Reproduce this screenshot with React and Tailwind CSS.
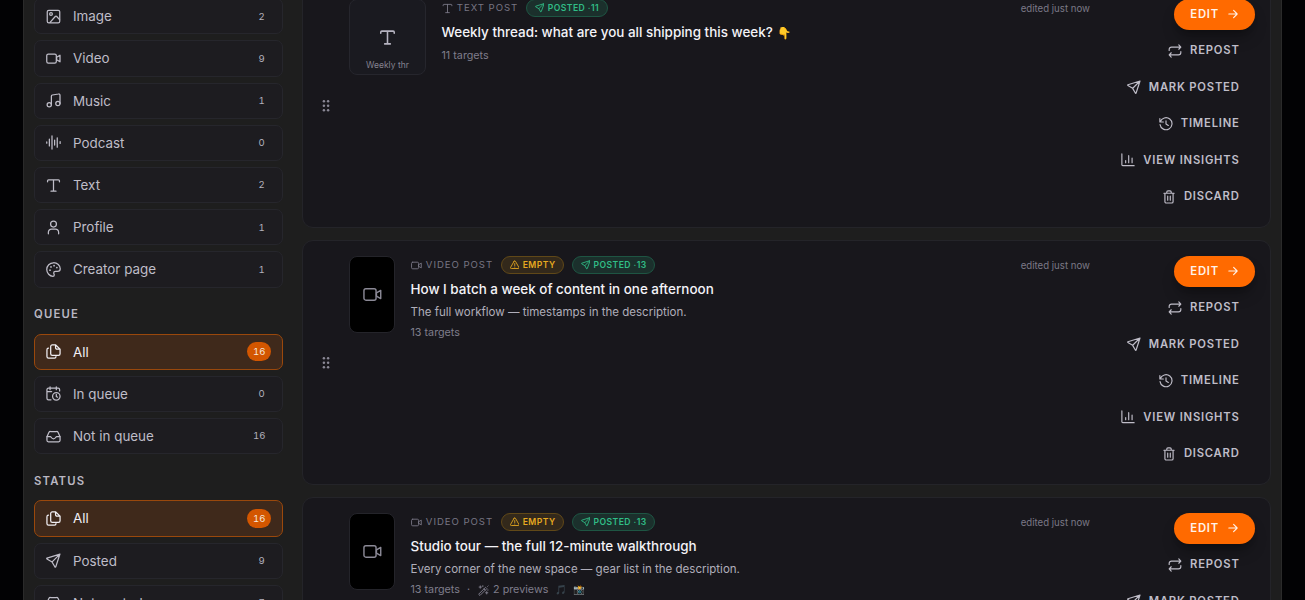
import React from 'react'
import clsx from 'clsx'

// Line icons share one 24px grid
const Icon = ({ size = 15, stroke = 2, className, children }) => (
  <svg
    width={size}
    height={size}
    viewBox="0 0 24 24"
    fill="none"
    stroke="currentColor"
    strokeWidth={stroke}
    strokeLinecap="round"
    strokeLinejoin="round"
    className={clsx('shrink-0', className)}
  >
    {children}
  </svg>
)

const ImageIcon = (p) => (
  <Icon {...p}>
    <rect x="2" y="2" width="20" height="20" rx="2.5" />
    <circle cx="8" cy="8" r="2.2" />
    <path d="M6.5 21.5 14.8 12a1.6 1.6 0 0 1 2.4 0l4.5 5" />
  </Icon>
)

const VideoIcon = (p) => (
  <Icon {...p}>
    <rect x="1.2" y="4.8" width="15.3" height="14.4" rx="2.5" />
    <path d="m17 10 5.4-3.2v10.4L17 14Z" />
  </Icon>
)

const MusicIcon = (p) => (
  <Icon {...p}>
    <circle cx="5.2" cy="18.8" r="3.4" />
    <circle cx="19" cy="16.8" r="3.4" />
    <path d="M8.6 18.8V5.2a2 2 0 0 1 1.6-2l9.8-1.6a2 2 0 0 1 2.4 2v13.2" />
  </Icon>
)

const WaveIcon = (p) => (
  <Icon {...p}>
    <path d="M1.2 11v2M5.4 6.5v11M9.6 1.5v21M13.8 8v8M18 4.5v15M22.6 10.5v3" />
  </Icon>
)

const TypeIcon = (p) => (
  <Icon {...p}>
    <path d="M12 3v18M8 21h8M2.5 6V4.5A1.5 1.5 0 0 1 4 3h16a1.5 1.5 0 0 1 1.5 1.5V6" />
  </Icon>
)

const UserIcon = (p) => (
  <Icon {...p}>
    <circle cx="12" cy="6.5" r="4.7" />
    <path d="M3.8 22v-2.5a5 5 0 0 1 5-5h6.4a5 5 0 0 1 5 5V22" />
  </Icon>
)

const PaletteIcon = (p) => (
  <Icon {...p}>
    <path d="M12 1.2C6 1.2 1.2 6 1.2 12S6 22.8 11 22.8c1.6 0 2.2-1 2.2-2.2 0-1.1-.9-1.6-.9-2.9 0-1.5 1.1-2.6 2.7-2.6h3.4c2.6 0 4.4-1.6 4.4-4.1 0-5.6-4.8-9.8-10.8-9.8Z" />
    <path d="M6.4 13v.1M8 7.8v.1M12.9 5.8v.1M17.4 8.8v.1" strokeWidth="2.8" />
  </Icon>
)

const FilesIcon = (p) => (
  <Icon {...p}>
    <path d="M15.5 1.5H10A2.5 2.5 0 0 0 7.5 4v11.5A2.5 2.5 0 0 0 10 18h10a2.5 2.5 0 0 0 2.5-2.5V8.2ZM15.3 1.7V6a2.3 2.3 0 0 0 2.3 2.3h4.7" />
    <path d="M4 6.5A2.5 2.5 0 0 0 1.5 9v11A2.5 2.5 0 0 0 4 22.5h9.5A2.5 2.5 0 0 0 16 20" />
  </Icon>
)

const CalendarClockIcon = (p) => (
  <Icon {...p}>
    <path d="M6.5 1.2v4.6M16.5 1.2v4.6M8 22H4a2.5 2.5 0 0 1-2.5-2.5V5.8a2.3 2.3 0 0 1 2.3-2.3h15.7a2.3 2.3 0 0 1 2.3 2.3V8M1.5 8.8H9" />
    <circle cx="16.5" cy="16.5" r="6" />
    <path d="M16.5 13.5v3.2l2 1.2" />
  </Icon>
)

const InboxIcon = (p) => (
  <Icon {...p}>
    <path d="M1.5 12.5 4.6 5.6A2.8 2.8 0 0 1 7.2 4h9.6a2.8 2.8 0 0 1 2.6 1.6l3.1 6.9v5.6a2.4 2.4 0 0 1-2.4 2.4H3.9a2.4 2.4 0 0 1-2.4-2.4Z" />
    <path d="M1.7 12H7c1.3 0 1.4 3.6 5 3.6s3.7-3.6 5-3.6h5.3" />
  </Icon>
)

const SendIcon = (p) => (
  <Icon {...p}>
    <path d="M22.3 1.7 1.6 8.2a.7.7 0 0 0-.1 1.3l8.2 4.8 4.6 8.1a.7.7 0 0 0 1.3-.1ZM9.8 14.2l12-12" />
  </Icon>
)

const RepeatIcon = (p) => (
  <Icon {...p}>
    <path d="m18.5 1.5 3.5 3.8-3.5 3.7M21.5 5.3H6A4 4 0 0 0 2 9.3V11M5.5 22.5 2 18.7 5.5 15M2.5 18.7H18a4 4 0 0 0 4-4V13" />
  </Icon>
)

const HistoryIcon = (p) => (
  <Icon {...p}>
    <path d="M1.5 2.5v6h6M2.2 8.3A10.3 10.3 0 1 1 1.8 13" />
    <path d="M12 6.5V12l4 2.5" />
  </Icon>
)

const ChartIcon = (p) => (
  <Icon {...p}>
    <path d="M1.5 1.5v18.7a1.5 1.5 0 0 0 1.5 1.5h19.5M8 13v3.5M13.2 4.5v12M19 8.5v8" />
  </Icon>
)

const TrashIcon = (p) => (
  <Icon {...p}>
    <path d="M3.2 5.5h17.6M8.2 5.2V3.5a2 2 0 0 1 2-2h3.6a2 2 0 0 1 2 2v1.7M5 5.8V20a2.3 2.3 0 0 0 2.3 2.3h9.4A2.3 2.3 0 0 0 19 20V5.8M9.8 10.5v7M14.2 10.5v7" />
  </Icon>
)

const ArrowIcon = (p) => (
  <Icon {...p}>
    <path d="M2 12h20M13.5 3.5 22 12l-8.5 8.5" />
  </Icon>
)

const WarningIcon = (p) => (
  <Icon {...p}>
    <path d="M10.3 3.2 1.6 18.5A2 2 0 0 0 3.3 21.5h17.4a2 2 0 0 0 1.7-3L13.7 3.2a2 2 0 0 0-3.4 0ZM12 9v5M12 17.6v.2" />
  </Icon>
)

const WandIcon = (p) => (
  <Icon {...p}>
    <path d="M2 19.5 16.5 5l2.8 2.8L4.8 22.3ZM13 8.5l2.8 2.8M5 2v5M2.5 4.5h5M19 14.5v5M16.5 17h5M10.5 1.5v2M22 2l-1 1M22 11h-1" />
  </Icon>
)

const GripIcon = () => (
  <svg width="8" height="14" viewBox="0 0 8 14" fill="currentColor">
    {[2.2, 6.7, 11.2].map((y) => (
      <React.Fragment key={y}>
        <circle cx="1.9" cy={y} r="1.25" />
        <circle cx="6.1" cy={y} r="1.25" />
      </React.Fragment>
    ))}
  </svg>
)

const formats = [
  { label: 'Image', count: 2, icon: ImageIcon },
  { label: 'Video', count: 9, icon: VideoIcon },
  { label: 'Music', count: 1, icon: MusicIcon },
  { label: 'Podcast', count: 0, icon: WaveIcon },
  { label: 'Text', count: 2, icon: TypeIcon },
  { label: 'Profile', count: 1, icon: UserIcon },
  { label: 'Creator page', count: 1, icon: PaletteIcon },
]

const queue = [
  { label: 'All', count: 16, icon: FilesIcon, active: true },
  { label: 'In queue', count: 0, icon: CalendarClockIcon },
  { label: 'Not in queue', count: 16, icon: InboxIcon },
]

const statuses = [
  { label: 'All', count: 16, icon: FilesIcon, active: true },
  { label: 'Posted', count: 9, icon: SendIcon },
  { label: 'Not posted', count: 7, icon: InboxIcon },
]

const posts = [
  {
    type: 'text',
    kind: 'Text post',
    posted: 11,
    title: 'Weekly thread: what are you all shipping this week?',
    emoji: '👇',
    excerpt: 'Weekly thr',
  },
  {
    type: 'video',
    kind: 'Video post',
    posted: 13,
    empty: true,
    title: 'How I batch a week of content in one afternoon',
    description: 'The full workflow — timestamps in the description.',
  },
  {
    type: 'video',
    kind: 'Video post',
    posted: 13,
    empty: true,
    title: 'Studio tour — the full 12-minute walkthrough',
    description: 'Every corner of the new space — gear list in the description.',
    previews: 2,
  },
]

const actions = [
  { label: 'Repost', icon: RepeatIcon },
  { label: 'Mark posted', icon: SendIcon },
  { label: 'Timeline', icon: HistoryIcon },
  { label: 'View insights', icon: ChartIcon },
  { label: 'Discard', icon: TrashIcon },
]

function FilterRow({ label, count, icon: RowIcon, active }) {
  return (
    <button
      className={clsx(
        'flex h-[36.2px] w-full shrink-0 items-center rounded-[7px] border pr-[11px] pl-[11px] text-left',
        active ? 'border-[#9a480c] bg-[#3f291b] text-[#f1eff4]' : 'border-[#26262c] bg-[#1d1c20] text-[#bfbdc8]'
      )}
    >
      <RowIcon size={15} />
      <span className="ml-3 flex-1 text-[13.4px]">{label}</span>
      <span
        className={clsx(
          'flex h-[19px] min-w-[19px] items-center justify-center rounded-full px-[5.6px] pt-px text-[9.6px] tabular-nums',
          active ? 'bg-[#d35600] text-[#f6e6dc]' : 'text-[#b2b0bc]'
        )}
      >
        {count}
      </span>
    </button>
  )
}

function FilterGroup({ title, items }) {
  return (
    <section>
      {title && (
        <h3 className="pt-[18.8px] pb-[11.4px] text-[11.3px] leading-4 font-semibold tracking-[0.105em] text-[#b9b7c2] uppercase">
          {title}
        </h3>
      )}
      <div className="flex flex-col gap-1.5">
        {items.map((item) => (
          <FilterRow key={item.label} {...item} />
        ))}
      </div>
    </section>
  )
}

function Thumb({ type, excerpt }) {
  if (type === 'text') {
    return (
      <div className="flex h-[76px] w-[77px] shrink-0 flex-col items-center rounded-lg border border-[#26262d] bg-[#1a1a20] pt-[29px] text-[#b6b4c1]">
        <TypeIcon size={17} stroke={2.2} />
        <span className="mt-[13px] text-[8.5px] leading-3 text-[#858391]">{excerpt}</span>
      </div>
    )
  }
  return (
    <div className="flex h-[77px] w-[46px] shrink-0 items-center justify-center rounded-lg border border-[#24242a] bg-black text-[#8b8996]">
      <VideoIcon size={19} stroke={1.8} />
    </div>
  )
}

function PostCard({ type, kind, posted, empty, title, emoji, description, excerpt, previews }) {
  const KindIcon = type === 'text' ? TypeIcon : VideoIcon
  return (
    <article className="flex h-[245px] shrink-0 rounded-[11px] border border-[#242429] bg-[#18171c] py-[15px] pr-[15px] pl-4">
      <div className="flex w-[14px] items-center justify-center text-[#8a8895]">
        <GripIcon />
      </div>
      <div className="ml-4 flex flex-1">
        <Thumb type={type} excerpt={excerpt} />
        <div className="ml-[15.5px] flex flex-1 flex-col items-start">
          <div className="flex h-[18px] items-center">
            <KindIcon size={11} className="text-[#777583]" />
            <span className="ml-[4.3px] text-[9.6px] tracking-[0.1em] text-[#777583] uppercase">{kind}</span>
            {empty && (
              <span className="ml-2 flex h-[18px] items-center gap-[3.5px] rounded-full border border-[#604818] bg-[#33291b] px-[7.5px] text-[8.6px] font-semibold tracking-[0.055em] text-[#e8aa20] uppercase">
                <WarningIcon size={9.5} stroke={2.2} />
                Empty
              </span>
            )}
            <span className="ml-2 flex h-[18px] items-center gap-[3.5px] rounded-full border border-[#1e5543] bg-[#1b302c] px-[7.5px] text-[8.6px] font-semibold tracking-[0.05em] text-[#30bd86] uppercase">
              <SendIcon size={9.5} stroke={2.2} />
              Posted ·{posted}
            </span>
          </div>
          <h2 className="mt-[4.6px] text-[13.45px] leading-5 font-medium text-[#f4f3f8]">
            {title}
            {emoji && <span className="ml-1 text-[11.5px]">{emoji}</span>}
          </h2>
          {description && <p className="mt-[5px] text-[11.52px] leading-[16px] text-[#b0aeba]">{description}</p>}
          <div className="mt-[5.8px] flex items-center text-[10.75px] leading-4 text-[#7f7d8b]">
            {posted} targets
            {previews && (
              <>
                <span className="mr-2 ml-[7px]">·</span>
                <WandIcon size={11} stroke={2.1} className="mr-1" />
                {previews} previews
                <span className="ml-[6.5px] text-[9.5px] opacity-50">🎵</span>
                <span className="ml-[6px] text-[9.5px] opacity-90">📸</span>
              </>
            )}
          </div>
        </div>
      </div>
      <span className="mr-4 text-[9.65px] leading-[19px] text-[#7b7987]">edited just now</span>
      <div className="flex flex-col items-end gap-[5.5px]">
        <button className="flex h-[31px] items-center rounded-full bg-[#ff6a00] pr-[17px] pl-4 text-[11.3px] font-semibold tracking-[0.07em] text-[#fff3ea] uppercase shadow-lg shadow-black/30">
          Edit
          <ArrowIcon size={10} stroke={2.7} className="ml-[9px]" />
        </button>
        {actions.map(({ label, icon: ActionIcon }) => (
          <button
            key={label}
            className="flex h-[31px] items-center gap-2 px-[15.4px] text-[11.25px] font-semibold tracking-[0.07em] text-[#bfbdc8] uppercase"
          >
            <ActionIcon size={14} />
            {label}
          </button>
        ))}
      </div>
    </article>
  )
}

export default function App() {
  return (
    <div className="h-[600px] overflow-hidden bg-[#020204] px-[23px] font-['Inter',sans-serif]">
      <div className="flex h-full gap-[19px] overflow-hidden border-x border-[#2a2a2a] bg-[#1e1e1e] px-2.5">
        <aside className="-mt-[1.8px] w-[249px] shrink-0">
          <FilterGroup items={formats} />
          <FilterGroup title="Queue" items={queue} />
          <FilterGroup title="Status" items={statuses} />
        </aside>
        <main className="-mt-[17px] flex flex-1 flex-col gap-3">
          {posts.map((post) => (
            <PostCard key={post.title} {...post} />
          ))}
        </main>
      </div>
    </div>
  )
}
